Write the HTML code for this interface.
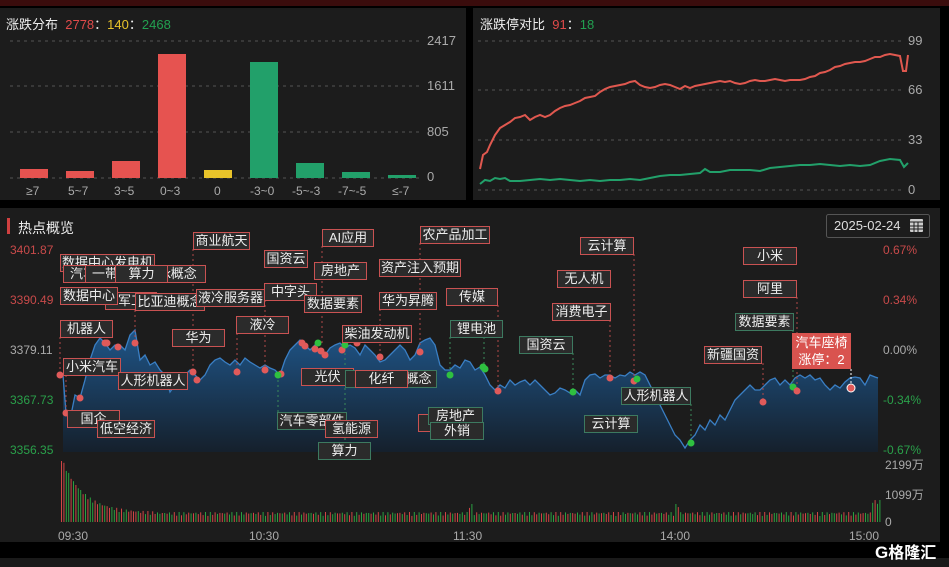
<!DOCTYPE html>
<html><head><meta charset="utf-8"><style>
*{margin:0;padding:0;box-sizing:border-box}
body{width:949px;height:567px;background:#000;position:relative;overflow:hidden;font-family:"Liberation Sans","Noto Sans CJK SC",sans-serif}
.p{position:absolute;background:#1c1c1c}
.t{position:absolute;font-size:13px;color:#ddd;white-space:nowrap}
.l{position:absolute;height:18px;background:#2b2b2b;border:1px solid #c95252;color:#eee;font-size:13px;line-height:16px;text-align:center;white-space:nowrap;overflow:hidden}
.g{border-color:#3d7a60}
svg{position:absolute;left:0;top:0}
</style></head><body>
<div style="position:absolute;left:0;top:0;width:949px;height:6px;background:#3a0c0c"></div>
<div class="p" style="left:0;top:8px;width:466px;height:192px"></div>
<div class="p" style="left:473px;top:8px;width:467px;height:192px"></div>
<div class="p" style="left:0;top:208px;width:940px;height:334px"></div>
<div style="position:absolute;left:0;top:558px;width:949px;height:9px;background:#1a1a1a"></div>

<svg width="949" height="567" id="s">
<g stroke="#555" stroke-dasharray="3,4" stroke-width="1">
<line x1="10" y1="41" x2="422" y2="41"/><line x1="10" y1="86" x2="422" y2="86"/><line x1="10" y1="132" x2="422" y2="132"/><line x1="10" y1="178" x2="422" y2="178"/>
<line x1="478" y1="41" x2="903" y2="41"/><line x1="478" y1="90" x2="903" y2="90"/><line x1="478" y1="140" x2="903" y2="140"/><line x1="478" y1="190" x2="903" y2="190"/>
</g>
<g fill="#e65350"><rect x="20" y="169" width="28" height="9"/><rect x="66" y="171" width="28" height="7"/><rect x="112" y="161" width="28" height="17"/><rect x="158" y="54" width="28" height="124"/></g>
<rect x="204" y="170" width="28" height="8" fill="#e8c32a"/>
<g fill="#22a06a"><rect x="250" y="62" width="28" height="116"/><rect x="296" y="163" width="28" height="15"/><rect x="342" y="172" width="28" height="6"/><rect x="388" y="175" width="28" height="3"/></g>
<polyline fill="none" stroke="#e0584f" stroke-width="2" points="480,169 483,155 487,152 490,145 495,135 500,128 505,125 510,122 515,118 520,117 525,115 530,120 535,117 540,115 545,117 550,115 555,111 560,108 565,106 570,105 575,103 580,101 585,98 590,97 595,96 600,92 605,89 610,87 615,86 620,85 625,84 630,82 635,81 640,85 645,87 650,88 655,87 660,85 665,84 670,85 675,87 680,89 685,86 690,88 695,86 700,85 705,84 710,83 715,82 720,81 725,82 730,81 735,83 740,84 745,83 750,81 755,80 760,81 765,81 770,80 775,79 780,80 785,81 790,80 795,80 800,80 805,79 810,77 815,76 820,73 825,72 830,70 835,67 840,66 845,64 850,63 855,62 860,62 865,61 870,59 875,57 880,57 885,55 890,54 895,55 900,56 903,71 906,71 908,55"/>
<polyline fill="none" stroke="#22a06a" stroke-width="2" points="480,184 485,180 490,181 495,178 500,179 505,178 510,181 520,181 530,180 540,179 550,180 560,179 570,180 580,181 590,180 600,181 610,180 620,180 630,179 640,180 650,178 660,176 670,175 680,175 690,174 700,173 705,169 710,172 720,172 730,170 740,170 750,170 760,171 770,168 780,167 790,166 800,165 810,165 820,164 830,165 840,166 850,165 860,166 870,165 880,161 890,159 900,160 904,167 908,163"/>
<defs><linearGradient id="gr" x1="0" y1="0" x2="0" y2="1"><stop offset="0" stop-color="#1f5588"/><stop offset="1" stop-color="#15202c"/></linearGradient></defs>
<path id="ar" fill="url(#gr)" stroke="none"/>
<polyline id="ln" fill="none" stroke="#3a7fc4" stroke-width="1.3"/>
<g id="con" stroke-dasharray="2,3" stroke-width="1"></g>
<g id="vol"></g>
<g id="dots"></g>
<rect x="7" y="218" width="3" height="16" fill="#d04040"/>
<rect x="826.5" y="214.5" width="103" height="23" rx="2" fill="#1c1c1c" stroke="#555"/>
<g fill="#ccc"><rect x="910" y="219" width="13" height="13" rx="1"/></g>
<g stroke="#1c1c1c" stroke-width="1"><line x1="910" y1="222" x2="923" y2="222"/><line x1="914" y1="222" x2="914" y2="232"/><line x1="918" y1="222" x2="918" y2="232"/><line x1="910" y1="226" x2="923" y2="226"/><line x1="910" y1="229" x2="923" y2="229"/></g>
<line x1="851" y1="369" x2="851" y2="388" stroke="#fff" stroke-dasharray="2,2"/>
<circle cx="851" cy="388" r="4" fill="#e05a5a" stroke="#fff" stroke-width="1"/>
</svg>

<div class="t" style="left:6px;top:14px;color:#eee">涨跌分布 &nbsp;<span style="color:#e04a4a">2778</span>：<span style="color:#e8c32a">140</span>：<span style="color:#22a050">2468</span></div>
<div class="t" style="left:427px;top:33px;color:#aaa">2417</div>
<div class="t" style="left:427px;top:78px;color:#aaa">1611</div>
<div class="t" style="left:427px;top:124px;color:#aaa">805</div>
<div class="t" style="left:427px;top:169px;color:#aaa">0</div>
<div class="t" style="left:26px;top:184px;color:#aaa;font-size:12px">≥7</div>
<div class="t" style="left:68px;top:184px;color:#aaa;font-size:12px">5~7</div>
<div class="t" style="left:114px;top:184px;color:#aaa;font-size:12px">3~5</div>
<div class="t" style="left:160px;top:184px;color:#aaa;font-size:12px">0~3</div>
<div class="t" style="left:214px;top:184px;color:#aaa;font-size:12px">0</div>
<div class="t" style="left:250px;top:184px;color:#aaa;font-size:12px">-3~0</div>
<div class="t" style="left:292px;top:184px;color:#aaa;font-size:12px">-5~-3</div>
<div class="t" style="left:338px;top:184px;color:#aaa;font-size:12px">-7~-5</div>
<div class="t" style="left:392px;top:184px;color:#aaa;font-size:12px">≤-7</div>

<div class="t" style="left:480px;top:14px;color:#eee">涨跌停对比 &nbsp;<span style="color:#e04a4a">91</span>：<span style="color:#22a050">18</span></div>
<div class="t" style="left:908px;top:33px;color:#aaa">99</div>
<div class="t" style="left:908px;top:82px;color:#aaa">66</div>
<div class="t" style="left:908px;top:132px;color:#aaa">33</div>
<div class="t" style="left:908px;top:182px;color:#aaa">0</div>

<div class="t" style="left:18px;top:218px;color:#eee;font-size:14px">热点概览</div>
<div class="t" style="left:834px;top:218px;color:#ddd">2025-02-24</div>
<div class="t" style="left:10px;top:243px;color:#c84a4a;font-size:12px">3401.87</div>
<div class="t" style="left:10px;top:293px;color:#c84a4a;font-size:12px">3390.49</div>
<div class="t" style="left:10px;top:343px;color:#aaa;font-size:12px">3379.11</div>
<div class="t" style="left:10px;top:393px;color:#2aa04a;font-size:12px">3367.73</div>
<div class="t" style="left:10px;top:443px;color:#2aa04a;font-size:12px">3356.35</div>
<div class="t" style="left:883px;top:243px;color:#c84a4a;font-size:12px">0.67%</div>
<div class="t" style="left:883px;top:293px;color:#c84a4a;font-size:12px">0.34%</div>
<div class="t" style="left:883px;top:343px;color:#aaa;font-size:12px">0.00%</div>
<div class="t" style="left:883px;top:393px;color:#2aa04a;font-size:12px">-0.34%</div>
<div class="t" style="left:883px;top:443px;color:#2aa04a;font-size:12px">-0.67%</div>
<div class="t" style="left:885px;top:456px;color:#aaa;font-size:12px">2199万</div>
<div class="t" style="left:885px;top:486px;color:#aaa;font-size:12px">1099万</div>
<div class="t" style="left:885px;top:515px;color:#aaa;font-size:12px">0</div>
<div class="t" style="left:58px;top:529px;color:#aaa;font-size:12px">09:30</div>
<div class="t" style="left:249px;top:529px;color:#aaa;font-size:12px">10:30</div>
<div class="t" style="left:453px;top:529px;color:#aaa;font-size:12px">11:30</div>
<div class="t" style="left:660px;top:529px;color:#aaa;font-size:12px">14:00</div>
<div class="t" style="left:849px;top:529px;color:#aaa;font-size:12px">15:00</div>
<div class="t" style="left:875px;top:539px;color:#fff;font-size:17px;font-weight:bold">G<span style="font-size:16px">格隆汇</span></div>

<div class="l" style="left:60px;top:254px;width:95px">数据中心发电机</div>
<div class="l" style="left:63px;top:265px;width:40px">汽车</div>
<div class="l" style="left:85px;top:265px;width:40px">一带</div>
<div class="l" style="left:155px;top:265px;width:51px">k概念</div>
<div class="l" style="left:115px;top:265px;width:53px">算力</div>
<div class="l" style="left:105px;top:292px;width:52px">军工</div>
<div class="l" style="left:60px;top:287px;width:58px">数据中心</div>
<div class="l" style="left:135px;top:293px;width:70px">比亚迪概念</div>
<div class="l" style="left:193px;top:232px;width:57px">商业航天</div>
<div class="l" style="left:322px;top:229px;width:52px">AI应用</div>
<div class="l" style="left:420px;top:226px;width:70px">农产品加工</div>
<div class="l" style="left:264px;top:250px;width:44px">国资云</div>
<div class="l" style="left:314px;top:262px;width:53px">房地产</div>
<div class="l" style="left:379px;top:259px;width:82px">资产注入预期</div>
<div class="l" style="left:196px;top:289px;width:69px">液冷服务器</div>
<div class="l" style="left:264px;top:283px;width:53px">中字头</div>
<div class="l" style="left:304px;top:295px;width:58px">数据要素</div>
<div class="l" style="left:379px;top:292px;width:58px">华为昇腾</div>
<div class="l" style="left:446px;top:288px;width:52px">传媒</div>
<div class="l" style="left:60px;top:320px;width:53px">机器人</div>
<div class="l" style="left:236px;top:316px;width:53px">液冷</div>
<div class="l" style="left:172px;top:329px;width:53px">华为</div>
<div class="l" style="left:342px;top:325px;width:70px">柴油发动机</div>
<div class="l g" style="left:450px;top:320px;width:53px">锂电池</div>
<div class="l" style="left:63px;top:358px;width:58px">小米汽车</div>
<div class="l" style="left:118px;top:372px;width:70px">人形机器人</div>
<div class="l" style="left:301px;top:368px;width:53px">光伏</div>
<div class="l g" style="left:345px;top:370px;width:30px">D</div>
<div class="l g" style="left:400px;top:370px;width:37px">概念</div>
<div class="l" style="left:355px;top:370px;width:53px">化纤</div>
<div class="l" style="left:67px;top:410px;width:53px">国企</div>
<div class="l" style="left:97px;top:420px;width:58px">低空经济</div>
<div class="l g" style="left:277px;top:412px;width:70px">汽车零部件</div>
<div class="l" style="left:325px;top:420px;width:53px">氢能源</div>
<div class="l g" style="left:318px;top:442px;width:53px">算力</div>
<div class="l" style="left:418px;top:414px;width:20px"></div>
<div class="l g" style="left:428px;top:407px;width:55px">房地产</div>
<div class="l g" style="left:430px;top:422px;width:54px">外销</div>
<div class="l" style="left:580px;top:237px;width:54px">云计算</div>
<div class="l" style="left:557px;top:270px;width:54px">无人机</div>
<div class="l" style="left:552px;top:303px;width:59px">消费电子</div>
<div class="l g" style="left:519px;top:336px;width:54px">国资云</div>
<div class="l g" style="left:621px;top:387px;width:70px">人形机器人</div>
<div class="l g" style="left:584px;top:415px;width:54px">云计算</div>
<div class="l" style="left:743px;top:247px;width:54px">小米</div>
<div class="l" style="left:743px;top:280px;width:54px">阿里</div>
<div class="l g" style="left:735px;top:313px;width:59px">数据要素</div>
<div class="l" style="left:704px;top:346px;width:58px">新疆国资</div>
<div style="position:absolute;left:792px;top:333px;width:59px;height:36px;background:#d9534f;color:#fff;font-size:13px;line-height:17px;text-align:center;padding-top:1px">汽车座椅<br>涨停：2</div>

<script>
var pts="63,375 66,413 70,420 75,395 80,398 85,380 90,360 95,345 100,338 105,343 110,350 115,345 120,345 125,350 130,335 135,330 140,360 145,355 150,365 155,362 160,370 165,375 170,392 175,385 180,378 185,375 190,370 195,375 200,380 205,375 210,365 215,360 220,358 225,362 230,365 235,360 240,365 245,358 250,362 255,365 260,368 265,365 270,368 275,370 280,375 285,360 290,350 295,345 300,340 305,345 310,350 315,345 320,352 325,355 330,348 335,345 340,343 345,348 350,345 355,348 360,355 365,345 370,350 375,355 380,362 385,360 390,355 395,350 400,345 405,350 410,360 415,355 420,343 425,340 430,338 435,345 440,365 445,370 450,370 455,365 460,368 465,360 470,362 475,370 480,367 485,375 490,385 495,390 500,385 505,388 510,380 515,385 520,382 525,380 530,385 535,380 540,385 545,390 550,395 555,393 560,388 565,390 570,393 575,390 580,395 585,380 590,375 595,374 600,378 605,375 610,375 615,378 620,375 625,376 630,372 635,375 640,372 645,375 650,385 655,395 660,405 665,415 670,425 675,435 680,440 685,448 690,440 695,435 700,425 705,430 710,420 715,425 720,415 725,420 730,410 735,400 740,395 745,390 750,385 755,390 760,390 765,385 770,380 775,378 780,385 785,380 790,385 795,378 800,375 805,378 810,375 815,380 820,378 825,385 830,390 835,385 840,388 845,382 850,378 855,377 860,378 865,385 870,375 875,377 878,378";
document.getElementById('ln').setAttribute('points',pts);
document.getElementById('ar').setAttribute('d','M'+pts.split(' ').join(' L')+' L878,452 L63,452 Z');
var v=document.getElementById('vol'),h="";
for(var x=61,i=0;x<=880;x+=2.4,i++){var t=i;var hh=6+Math.abs(Math.sin(i*1.7))*4;
if(t<40)hh+=55*Math.exp(-t/9);
if(Math.abs(x-470)<2||Math.abs(x-676)<3)hh+=8;if(x>870)hh+=12;
var c=(Math.sin(i*2.3+Math.cos(i))>0)?"#d04545":"#2aa040";
h+='<rect x="'+x.toFixed(1)+'" y="'+(522-hh).toFixed(1)+'" width="1" height="'+hh.toFixed(1)+'" fill="'+c+'"/>';}
v.innerHTML=h;
var cn=[[193,249,372,'r'],[322,246,343,'r'],[420,243,352,'r'],[634,254,381,'r'],[610,320,378,'r'],[797,297,391,'r'],[573,353,392,'g'],[691,404,443,'g'],[763,363,402,'r'],[498,305,391,'r'],[484,337,367,'g'],[60,337,375,'r'],[66,375,413,'r'],[237,333,372,'r'],[265,300,370,'r'],[380,309,357,'r'],[450,337,375,'g'],[793,330,387,'g'],[278,375,412,'g'],[135,310,343,'r'],[345,343,442,'g']];
var ch="";cn.forEach(function(p){ch+='<line x1="'+p[0]+'" y1="'+p[1]+'" x2="'+p[0]+'" y2="'+p[2]+'" stroke="'+(p[3]=='r'?'#b04848':'#3a8a5a')+'"/>';});
document.getElementById('con').innerHTML=ch;
var d=[[60,375,'r'],[66,413,'r'],[80,398,'r'],[98,365,'r'],[105,343,'r'],[107,343,'r'],[118,347,'r'],[135,343,'r'],[193,372,'r'],[197,380,'r'],[237,372,'r'],[265,370,'r'],[281,374,'r'],[278,375,'g'],[302,343,'r'],[305,346,'r'],[315,349,'r'],[318,343,'g'],[321,351,'r'],[325,355,'r'],[342,350,'r'],[345,345,'g'],[357,343,'r'],[380,357,'r'],[420,352,'r'],[450,375,'g'],[483,367,'g'],[485,369,'g'],[498,391,'r'],[573,392,'g'],[610,378,'r'],[634,381,'r'],[637,379,'g'],[691,443,'g'],[763,402,'r'],[793,387,'g'],[797,391,'r']];
var dh="";d.forEach(function(p){dh+='<circle cx="'+p[0]+'" cy="'+p[1]+'" r="3.5" fill="'+(p[2]=='r'?'#e05a5a':'#2fc040')+'"/>';});
document.getElementById('dots').innerHTML=dh;
</script>
</body></html>
